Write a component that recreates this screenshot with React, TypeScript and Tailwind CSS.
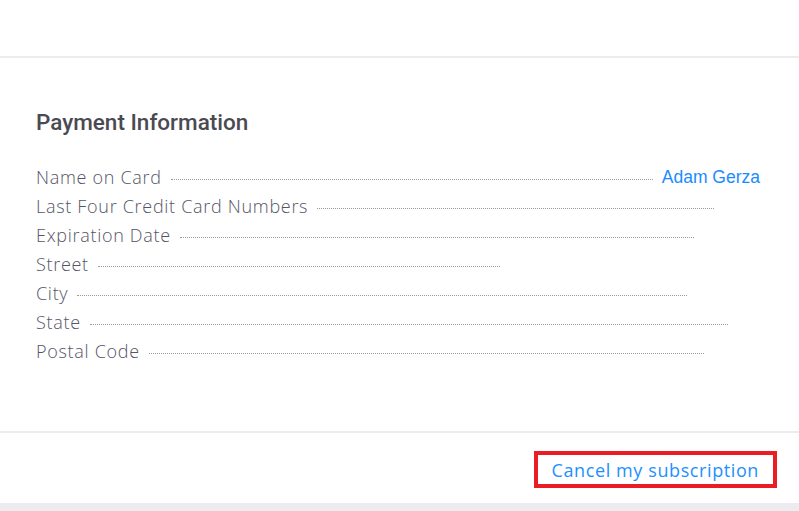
import React from "react";

const rows = [
  { label: "Name on Card", value: "Adam Gerza", width: "w-full" },
  { label: "Last Four Credit Card Numbers", value: "", width: "w-[678px]" },
  { label: "Expiration Date", value: "", width: "w-[658px]" },
  { label: "Street", value: "", width: "w-[464px]" },
  { label: "City", value: "", width: "w-[651px]" },
  { label: "State", value: "", width: "w-[692px]" },
  { label: "Postal Code", value: "", width: "w-[668px]" },
];

export default function App() {
  return (
    <div className="w-[799px] h-[511px] bg-white flex flex-col font-['Open_Sans',sans-serif]">
      <div className="h-[58px] border-b-2 border-[#ebebf0]" />

      <div className="h-[375px] px-[36px] pt-[49px] border-b-2 border-[#ebebf0]">
        <h2 className="font-['Roboto',sans-serif] font-medium text-[22.5px] leading-[30px] text-[#4a4a52]">
          Payment Information
        </h2>

        <div className="mt-[26px] flex flex-col pr-[3px]">
          {rows.map((r) => (
            <div key={r.label} className={`${r.width} flex items-center h-[29px]`}>
              <span className="text-[18px] font-light tracking-[0.7px] text-[#555566] whitespace-nowrap">
                {r.label}
              </span>
              <span className="flex-1 ml-[9px] mt-[3px] border-t border-dotted border-[#9a9a9a]" />
              {r.value && (
                <span className="ml-[9px] font-['Liberation_Sans',sans-serif] text-[17.5px] text-[#1a8cff]">
                  {r.value}
                </span>
              )}
            </div>
          ))}
        </div>
      </div>

      <div className="flex-1 flex justify-end items-start pt-[18px] pr-[22px]">
        <button className="h-[37px] px-[14px] border-4 border-[#ec1c24] text-[18px] tracking-[0.6px] text-[#1e90ff] leading-none">
          Cancel my subscription
        </button>
      </div>
      <div className="h-[8px] bg-[#ebebf0]" />
    </div>
  );
}
